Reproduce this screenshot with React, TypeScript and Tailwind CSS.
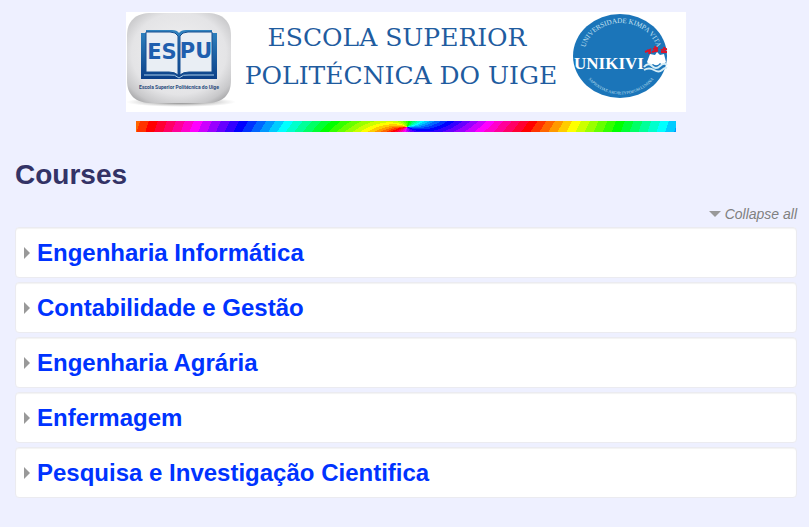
import React from 'react';

const COURSES = [
  'Engenharia Informática',
  'Contabilidade e Gestão',
  'Engenharia Agrária',
  'Enfermagem',
  'Pesquisa e Investigação Cientifica',
];

const BAR_WIDTH = 540;
const BAR_HEIGHT = 11;

// Spiral of hues around the middle of the bar, merged into runs per row
const buildRainbow = () => {
  const runs: { x: number; y: number; w: number; hue: number }[] = [];
  for (let y = 0; y < BAR_HEIGHT; y++) {
    for (let x = 0; x < BAR_WIDTH; x++) {
      const dx = x + 0.5 - 271;
      const dy = (5.9 - y - 0.5) * 2;
      const angle = (Math.atan2(dy, dx) * 180) / Math.PI;
      const raw = 195 - angle + Math.abs(dx) * 1.35;
      const hue = (Math.round(raw / 12) * 12 + 720) % 360;
      const last = runs[runs.length - 1];
      if (last && last.y === y && last.hue === hue) last.w++;
      else runs.push({ x, y, w: 1, hue });
    }
  }
  return runs;
};

const RAINBOW = buildRainbow();

const EspuLogo: React.FC = () => (
  <svg width="112" height="100" viewBox="0 0 112 100" className="shrink-0" role="img" aria-label="ESPU">
    <defs>
      <radialGradient id="tile" cx="0.5" cy="0.45" r="0.7">
        <stop offset="0" stopColor="#f2f2f3" />
        <stop offset="0.65" stopColor="#e4e4e6" />
        <stop offset="0.85" stopColor="#c8c8ca" />
        <stop offset="1" stopColor="#98989a" />
      </radialGradient>
      <linearGradient id="cover" x1="0" y1="0" x2="0" y2="1">
        <stop offset="0" stopColor="#2f83c0" />
        <stop offset="1" stopColor="#0b3f88" />
      </linearGradient>
      <radialGradient id="shadow">
        <stop offset="0" stopColor="#666" />
        <stop offset="1" stopColor="#aaa" stopOpacity="0" />
      </radialGradient>
    </defs>
    <ellipse cx="55" cy="90" rx="55" ry="5" fill="url(#shadow)" />
    <path d="M26 1H80C97 1 105 9 105 24V68C105 83 97 91 80 91H26C9 91 1 83 1 68V24C1 9 9 1 26 1Z" fill="url(#tile)" />
    <path d="M15 21H20V18H46Q51 18 53 21Q55 18 60 18H86V21H91V67H15Z" fill="url(#cover)" />
    <path d="M20 20H44Q50 20 52 24V63Q49 60 43 60H20Z" fill="#e9eef4" stroke="#164f91" strokeWidth="1" />
    <path d="M86 20H62Q56 20 54 24V63Q57 60 63 60H86Z" fill="#e9eef4" stroke="#164f91" strokeWidth="1" />
    <path d="M18 63H43Q49 62 53 66Q57 62 63 63H88" fill="none" stroke="#a9cce6" strokeWidth="1" />
    <g fill="#1f5fae" fontFamily="DejaVu Sans, sans-serif" fontWeight="700" textAnchor="middle">
      <text x="36" y="47" fontSize="21">ES</text>
      <text x="70" y="46" fontSize="21">PU</text>
    </g>
    <text x="53" y="77" textAnchor="middle" fontSize="5" fontWeight="700" fontFamily="Roboto, sans-serif" fill="#2a4b7c">
      Escola Superior Politécnica do Uige
    </text>
  </svg>
);

const UnikiviLogo: React.FC = () => (
  <svg width="122" height="100" viewBox="-12 0 122 100" className="shrink-0" role="img" aria-label="UNIKIVI">
    <defs>
      <path id="arc-top" d="M8 43A37 32 0 0 1 82 43" />
      <path id="arc-bottom" d="M7 58A41 39 0 0 0 83 58" />
    </defs>
    <ellipse cx="44" cy="44" rx="47" ry="42" fill="#1b75b9" />
    <g fill="#c9e3f2" fontFamily="Liberation Serif, serif" textAnchor="middle">
      <text fontSize="7"><textPath href="#arc-top" startOffset="50%">UNIVERSIDADE KIMPA VITA</textPath></text>
      <text fontSize="4"><textPath href="#arc-bottom" startOffset="50%">SAPIENTIAE ARCHETYPORUM LUMINA</textPath></text>
    </g>
    <text x="-2" y="57" fontSize="17" fontWeight="700" fontFamily="Liberation Serif, serif" fill="#fff">UNIKIVI</text>
    <path d="M71 50L74 42L79 43L81 40L84 43L88 42L90 50Q87 54 84 51Q81 55 77 52Q74 55 71 50Z" fill="#fff" />
    <path d="M68 55Q72 50 76 54T84 54T91 53M68 58Q73 55 78 58T86 58T91 56" fill="none" stroke="#d5edf6" strokeWidth="2" />
    <g fill="none" stroke="#d9152b" strokeWidth="2">
      <path d="M69 40L74 38L73 42M71 38L75 41" />
      <path d="M77 37L82 36M79 34L81 40M76 40L82 38" />
      <path d="M85 38L91 37M88 35L89 41M85 40L91 40" />
    </g>
  </svg>
);

const Banner: React.FC = () => (
  <header className="flex flex-col items-center gap-[9px]">
    <div className="flex w-full max-w-[560px] justify-between bg-white">
      <EspuLogo />
      <div className="pt-[7px] text-center font-['DejaVu_Serif',serif] text-[25px] leading-[38px] whitespace-nowrap text-[#1f5c9f]">
        <div className="pr-2">ESCOLA SUPERIOR</div>
        <div>POLITÉCNICA DO UIGE</div>
      </div>
      <UnikiviLogo />
    </div>
    <svg
      viewBox={`0 0 ${BAR_WIDTH} ${BAR_HEIGHT}`}
      className="h-[11px] w-full max-w-[540px]"
      preserveAspectRatio="none"
      shapeRendering="crispEdges"
      aria-hidden="true"
    >
      {RAINBOW.map((run) => (
        <rect key={`${run.x}-${run.y}`} x={run.x} y={run.y} width={run.w} height={1} fill={`hsl(${run.hue}, 100%, 50%)`} />
      ))}
    </svg>
  </header>
);

export default function App() {
  return (
    <div className="min-h-screen bg-[#eef0ff] py-3 pr-3 pl-[15px] font-['Liberation_Sans',Arial,sans-serif]">
      <Banner />

      <main>
        <h1 className="mt-6 text-[28px] leading-[38px] font-bold text-[#333366]">Courses</h1>

        <div className="mt-2.5 flex justify-end">
          <button type="button" className="flex items-center gap-1 text-sm leading-5 text-[#808080] italic">
            <svg width="12" height="6" viewBox="0 0 12 6" aria-hidden="true">
              <path d="M0 0H12L6 6Z" fill="#999" />
            </svg>
            Collapse all
          </button>
        </div>

        <ul className="mt-[3px] flex flex-col gap-1">
          {COURSES.map((course) => (
            <li
              key={course}
              className="flex h-[51px] items-center gap-[7px] rounded border border-[#ebebf0] bg-white px-2 shadow-[inset_0_1px_1px_rgba(0,0,0,0.05)]"
            >
              <svg width="6" height="12" viewBox="0 0 6 12" aria-hidden="true">
                <path d="M0 0L6 6L0 12Z" fill="#999" />
              </svg>
              <h3 className="text-2xl leading-8 font-bold text-[#0033ff]">
                <a href="#">{course}</a>
              </h3>
            </li>
          ))}
        </ul>
      </main>
    </div>
  );
}
